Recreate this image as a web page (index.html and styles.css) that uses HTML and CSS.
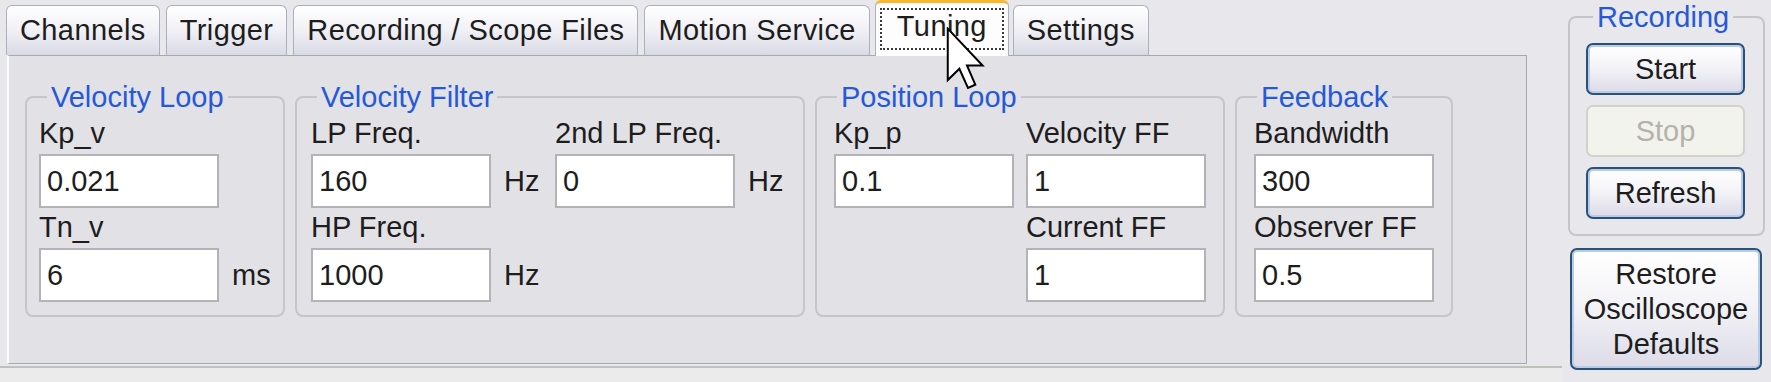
FILE: index.html
```html
<!DOCTYPE html>
<html>
<head>
	<meta charset="utf-8">
	<title>Tuning</title>
	<link rel="stylesheet" href="styles.css">
</head>
<body>
<div class="window">
	<!-- Tab control -->
	<div class="main">
		<div class="tabs">
			<div class="tab">Channels</div>
			<div class="tab">Trigger</div>
			<div class="tab">Recording / Scope Files</div>
			<div class="tab">Motion Service</div>
			<div class="tab active"><span class="focus">Tuning</span></div>
			<div class="tab">Settings</div>
		</div>
		<div class="page">
			<fieldset class="group vloop">
				<legend>Velocity Loop</legend>
				<div class="fields">
					<div class="field"><label>Kp_v</label><div class="box"><input value="0.021"></div></div>
					<div class="field"><label>Tn_v</label><div class="box"><input value="6"><span class="unit">ms</span></div></div>
				</div>
			</fieldset>
			<fieldset class="group vfilter">
				<legend>Velocity Filter</legend>
				<div class="fields">
					<div class="field"><label>LP Freq.</label><div class="box"><input value="160"><span class="unit">Hz</span></div></div>
					<div class="field"><label>2nd LP Freq.</label><div class="box"><input value="0"><span class="unit">Hz</span></div></div>
					<div class="field"><label>HP Freq.</label><div class="box"><input value="1000"><span class="unit">Hz</span></div></div>
				</div>
			</fieldset>
			<fieldset class="group ploop">
				<legend>Position Loop</legend>
				<div class="fields">
					<div class="field"><label>Kp_p</label><div class="box"><input value="0.1"></div></div>
					<div class="field"><label>Velocity FF</label><div class="box"><input value="1"></div></div>
					<div></div>
					<div class="field"><label>Current FF</label><div class="box"><input value="1"></div></div>
				</div>
			</fieldset>
			<fieldset class="group feedback">
				<legend>Feedback</legend>
				<div class="fields">
					<div class="field"><label>Bandwidth</label><div class="box"><input value="300"></div></div>
					<div class="field"><label>Observer FF</label><div class="box"><input value="0.5"></div></div>
				</div>
			</fieldset>
		</div>
		<div class="status"></div>
	</div>

	<!-- Recording buttons -->
	<div class="side">
		<fieldset class="group rec">
			<legend>Recording</legend>
			<div class="buttons">
				<button class="btn">Start</button>
				<button class="btn" disabled>Stop</button>
				<button class="btn">Refresh</button>
			</div>
		</fieldset>
		<button class="btn restore">Restore<br>Oscilloscope<br>Defaults</button>
	</div>

	<svg class="cursor" width="40" height="63" viewBox="0 0 12 19">
		<path d="M0.5 0.5 L0.5 16 L4 12.6 L6.6 18.4 L8.8 17.4 L6.3 11.6 L11 11.6 Z" fill="#fff" stroke="#000" stroke-width="0.6" stroke-linejoin="miter"/>
	</svg>
</div>
</body>
</html>
```

FILE: styles.css
```css
body {
	margin: 0;
	background: #e8e7ec;
	font-family: "Liberation Sans", Arial, sans-serif;
	font-size: 29px;
	color: #1d1d1d;
	overflow: hidden;
}
.window { display: flex; height: 382px; position: relative; }
.main { width: 1562px; display: flex; flex-direction: column; }

/* tabs */
.tabs { display: flex; align-items: flex-end; height: 55px; padding-left: 6px; position: relative; z-index: 1; }
.tab {
	height: 50px; line-height: 48px; padding: 0 13px; margin-right: 6px;
	box-sizing: border-box; white-space: nowrap; letter-spacing: 0.4px;
	border: 1px solid #aab0bc; border-bottom: none; border-radius: 6px 6px 0 0;
	background: linear-gradient(#ffffff, #f4f4f8 40%, #dadae5);
}
.tab.active {
	height: 56px; margin-bottom: -1px; padding: 5px 4px 0; margin-right: 4px; margin-left: -1px;
	line-height: normal; border-top: 3px solid #f7b731; background: #fdfdfe;
}
.focus { display: block; line-height: 32px; padding: 0 15px 6px; border: 2px dotted #3a3a3a; }

/* page */
.page {
	margin-left: 7px; width: 1520px; height: 309px; box-sizing: border-box;
	border: 1px solid #a9a9b0; border-left: 2px solid #fbfbfb;
	background: #e2e1e6;
	padding: 25px 0 0 16px;
	display: flex; gap: 10px; align-items: flex-start;
}
.status { flex: 1; margin-top: 2px; border-top: 2px solid #bcc3bc; background: #ebebeb; }

/* group boxes */
.group { margin: 0; padding: 0; border: 2px solid #c6c5cb; border-radius: 8px; box-sizing: border-box; min-width: 0; }
.group legend { margin-left: 20px; padding: 0 4px; line-height: 32px; color: #2559d8; }
.vloop { width: 260px; }
.vfilter { width: 510px; }
.ploop { width: 410px; }
.feedback { width: 218px; }

.fields { display: grid; row-gap: 3px; padding: 4px 0 13px 12px; }
.vfilter .fields { grid-template-columns: 244px 244px; padding-left: 14px; }
.ploop .fields { grid-template-columns: 192px 180px; padding-left: 17px; }
.feedback .fields { padding-left: 17px; }
.field { display: flex; flex-direction: column; gap: 5px; }
.field label { line-height: 32px; white-space: nowrap; }
.box { display: flex; align-items: center; }
.box input {
	width: 180px; height: 54px; box-sizing: border-box; margin: 0;
	border: 2px solid #b3b2b8; background: #fff;
	font: inherit; color: #1d1d1d; padding: 0 6px;
}
.unit { margin-left: 13px; }

/* recording */
.side { margin-left: 6px; padding-top: 1px; width: 197px; }
.rec { width: 197px; }
.rec legend { margin-left: 23px; }
.buttons { display: flex; flex-direction: column; gap: 10px; padding: 10px 0 15px 16px; }
.btn {
	display: block; width: 159px; height: 52px; padding: 0; box-sizing: border-box;
	font: inherit; color: #1d1d1d;
	border: 2px solid #2b5179; border-radius: 7px;
	background: linear-gradient(#ffffff, #f4f4f8 45%, #dcdbe7);
	box-shadow: inset 0 0 0 2px #b6cce8;
}
.btn:disabled {
	color: #b4b2aa; border-color: #d2d1ca; background: #f3f3ee; box-shadow: none;
}
.restore { width: 192px; height: 122px; margin: 12px 0 0 2px; line-height: 35px; }

.cursor { position: absolute; left: 946px; top: 27px; z-index: 2; }
```
